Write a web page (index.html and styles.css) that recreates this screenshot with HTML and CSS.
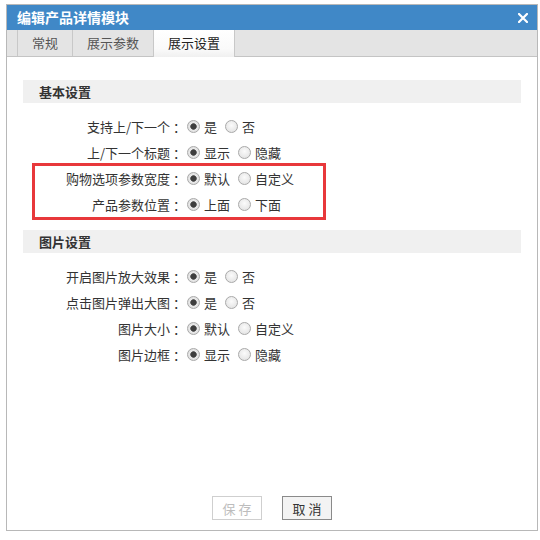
FILE: index.html
```html
<!DOCTYPE html>
<html lang="zh-CN">
<head>
<meta charset="utf-8">
<title>编辑产品详情模块</title>
<link rel="stylesheet" href="styles.css">
</head>
<body>
<div class="dialog">
  <div class="titlebar">
    <span class="title">编辑产品详情模块</span>
    <svg class="close" width="10" height="10" viewBox="0 0 10 10"><path d="M1 1L9 9M9 1L1 9" stroke="#fff" stroke-width="2.2" stroke-linecap="square"/></svg>
  </div>
  <div class="tabs">
    <div class="tab">常规</div>
    <div class="tab">展示参数</div>
    <div class="tab active">展示设置</div>
  </div>
  <div class="content">
    <div class="section">
      <div class="section-head">基本设置</div>
      <div class="rows">
        <div class="row"><span class="label">支持上/下一个<span class="colon">：</span></span><label class="opt"><span class="radio on"></span>是</label><label class="opt"><span class="radio"></span>否</label></div>
        <div class="row"><span class="label">上/下一个标题<span class="colon">：</span></span><label class="opt"><span class="radio on"></span>显示</label><label class="opt"><span class="radio"></span>隐藏</label></div>
        <div class="row"><span class="label">购物选项参数宽度<span class="colon">：</span></span><label class="opt"><span class="radio on"></span>默认</label><label class="opt"><span class="radio"></span>自定义</label></div>
        <div class="row"><span class="label">产品参数位置<span class="colon">：</span></span><label class="opt"><span class="radio on"></span>上面</label><label class="opt"><span class="radio"></span>下面</label></div>
      </div>
    </div>
    <div class="section">
      <div class="section-head">图片设置</div>
      <div class="rows">
        <div class="row"><span class="label">开启图片放大效果<span class="colon">：</span></span><label class="opt"><span class="radio on"></span>是</label><label class="opt"><span class="radio"></span>否</label></div>
        <div class="row"><span class="label">点击图片弹出大图<span class="colon">：</span></span><label class="opt"><span class="radio on"></span>是</label><label class="opt"><span class="radio"></span>否</label></div>
        <div class="row"><span class="label">图片大小<span class="colon">：</span></span><label class="opt"><span class="radio on"></span>默认</label><label class="opt"><span class="radio"></span>自定义</label></div>
        <div class="row"><span class="label">图片边框<span class="colon">：</span></span><label class="opt"><span class="radio on"></span>显示</label><label class="opt"><span class="radio"></span>隐藏</label></div>
      </div>
    </div>
  </div>
  <div class="footer">
    <button class="btn disabled">保存</button>
    <button class="btn">取消</button>
  </div>
  <div class="highlight"></div>
</div>
</body>
</html>
```

FILE: styles.css
```css
* { box-sizing: border-box; }
body {
  margin: 0;
  background: #fff;
  font-family: "Noto Sans CJK SC", "Noto Sans", sans-serif;
  font-size: 13px;
  color: #333;
}
.dialog {
  position: relative;
  margin: 4px 0 0 6px;
  width: 532px;
  height: 527px;
  border: 1px solid #b8b8b8;
  display: flex;
  flex-direction: column;
}
.titlebar {
  height: 25px;
  background: #4088c7;
  display: flex;
  align-items: center;
  justify-content: space-between;
  padding: 0 9px 0 10px;
}
.title {
  color: #fff;
  font-weight: bold;
  font-size: 14px;
  line-height: 25px;
}
.close { display: block; }
.tabs {
  height: 27px;
  background: #e4e4e4;
  border-bottom: 1px solid #c4c4c4;
  display: flex;
  padding-left: 10px;
}
.tab {
  padding: 0 14px;
  line-height: 26px;
  border-left: 1px solid #c8c8c8;
  color: #555;
  font-size: 13px;
}
.tab.active {
  background: linear-gradient(#fff, #fafafa 70%, #f0f0f0);
  border-right: 1px solid #c8c8c8;
  color: #222;
  height: 27px;
}
.content {
  padding: 23px 16px 0 16px;
}
.section { margin-bottom: 13px; }
.section-head {
  height: 23px;
  line-height: 23px;
  background: #f0f0f0;
  padding-left: 16px;
  font-weight: bold;
  color: #333;
}
.rows { padding-top: 10px; }
.row {
  height: 26px;
  display: flex;
  align-items: center;
}
.label {
  width: 160px;
  text-align: right;
  color: #333;
  white-space: nowrap;
}
.colon {
  display: inline-block;
  width: 13px;
  padding-left: 3px;
  text-align: left;
  overflow: visible;
}
.opt {
  display: flex;
  align-items: center;
  margin-left: 4px;
  margin-right: 4px;
}
.radio {
  width: 13px;
  height: 13px;
  border-radius: 50%;
  border: 1px solid #a9a9a9;
  background: radial-gradient(circle at 50% 40%, #fbfbfb, #dedede);
  margin-right: 4px;
  position: relative;
}
.radio.on {
  background: radial-gradient(circle, #3e3e3e 0 2.6px, #6a6a6a 3px, #e9e9e9 3.6px, #d8d8d8 100%);
}
.footer {
  margin-top: auto;
  padding-bottom: 10px;
  display: flex;
  justify-content: center;
  gap: 20px;
}
.btn {
  width: 50px;
  height: 24px;
  font-family: inherit;
  font-size: 13px;
  letter-spacing: 3px;
  padding: 0 0 0 3px;
  border: 1px solid #8a8a8a;
  background: #f3f3f3;
  color: #333;
}
.btn.disabled {
  border-color: #cfcfcf;
  background: #fff;
  color: #bdbdbd;
}
.highlight {
  position: absolute;
  left: 25px;
  top: 158px;
  width: 294px;
  height: 57px;
  border: 3px solid #e8383b;
  pointer-events: none;
}
```
